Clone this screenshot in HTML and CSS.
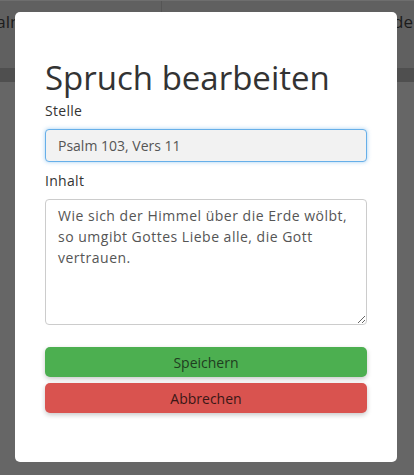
FILE: index.html
```html
<!DOCTYPE html>
<html lang="de">
<head>
<meta charset="utf-8">
<title>Spruch bearbeiten</title>
<link rel="stylesheet" href="styles.css">
</head>
<body>
<div class="page">
  <div class="topbar">
    <div class="cell cell-left"><span class="cell-text">Psalm</span></div>
    <div class="cell cell-right"><span class="cell-text">Gemeinde</span></div>
  </div>
  <div class="band"></div>
</div>
<div class="overlay">
  <div class="modal">
    <h1 class="modal-title">Spruch bearbeiten</h1>
    <label class="field-label" for="stelle">Stelle</label>
    <input class="field-input" id="stelle" type="text" value="Psalm 103, Vers 11">
    <label class="field-label" for="inhalt">Inhalt</label>
    <textarea class="field-textarea" id="inhalt">Wie sich der Himmel über die Erde wölbt, so umgibt Gottes Liebe alle, die Gott vertrauen.</textarea>
    <div class="actions">
      <button class="btn btn-save" type="button">Speichern</button>
      <button class="btn btn-cancel" type="button">Abbrechen</button>
    </div>
  </div>
</div>
</body>
</html>
```
FILE: styles.css
```css
html, body {
  margin: 0;
  padding: 0;
  height: 100%;
}
body {
  background: #666666;
  font-family: "Open Sans", "Liberation Sans", sans-serif;
  color: #333;
  overflow: hidden;
}
.page {
  height: 100%;
}
.topbar {
  display: flex;
  height: 67px;
  background: #606060;
  border-top: 1px solid #6e6e6e;
}
.cell {
  display: flex;
  align-items: flex-start;
  padding-top: 9px;
  overflow: hidden;
  white-space: nowrap;
  font-size: 17px;
  color: #1c1c1c;
}
.cell-left {
  width: 161px;
  border-right: 1px solid #555;
  justify-content: flex-start;
}
.cell-left .cell-text {
  margin-left: -22px;
}
.cell-right {
  flex: 1;
  justify-content: flex-end;
  padding-right: 1px;
}
.band {
  height: 14px;
  background: #4f4f4f;
}
.overlay {
  position: fixed;
  inset: 0;
}
.modal {
  position: absolute;
  left: 15px;
  top: 12px;
  width: 382px;
  height: 450px;
  box-sizing: border-box;
  padding: 46px 30px 30px;
  background: #fff;
  border-radius: 5px;
  display: flex;
  flex-direction: column;
}
.modal-title {
  margin: 0 0 2px;
  font-size: 33px;
  font-weight: 400;
  line-height: 40px;
  color: #333;
}
.field-label {
  display: block;
  font-size: 14px;
  font-weight: 500;
  line-height: 21px;
  letter-spacing: 0.3px;
  color: #333;
  margin-bottom: 8px;
}
.field-input {
  box-sizing: border-box;
  width: 100%;
  height: 33px;
  margin: 0 0 8px;
  padding: 0 12px;
  font: inherit;
  font-size: 14px;
  color: #555;
  background: #f2f2f2;
  border: 1px solid #66afe9;
  border-radius: 4px;
  box-shadow: 0 0 4px rgba(102, 175, 233, 0.6);
  outline: none;
}
.field-textarea {
  box-sizing: border-box;
  width: 100%;
  height: 126px;
  margin: 0;
  padding: 5px 12px;
  font: inherit;
  font-size: 14px;
  line-height: 21px;
  letter-spacing: 0.5px;
  color: #555;
  background: #fff;
  border: 1px solid #ccc;
  border-radius: 4px;
  resize: vertical;
  outline: none;
}
.actions {
  display: flex;
  flex-direction: column;
  gap: 6px;
  margin-top: 22px;
}
.btn {
  height: 30px;
  width: 100%;
  border: none;
  border-radius: 5px;
  font: inherit;
  font-size: 14px;
  color: #222;
  box-shadow: 0 2px 5px rgba(0, 0, 0, 0.22);
  cursor: pointer;
}
.btn-save {
  background: #4caf50;
  color: #1f3d20;
}
.btn-cancel {
  background: #d9534f;
  color: #3a1716;
}
```
